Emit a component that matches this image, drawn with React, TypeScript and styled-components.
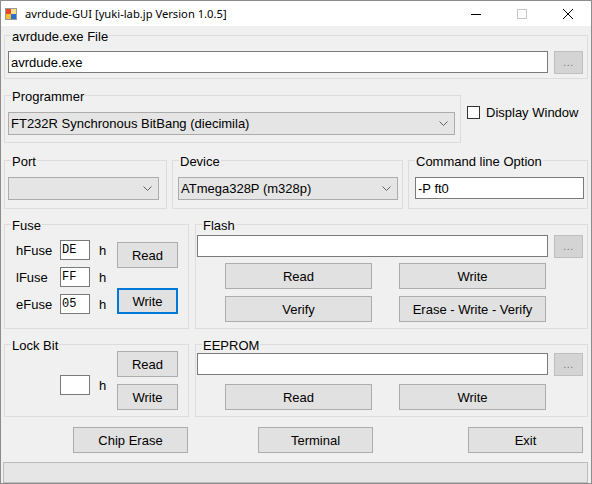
import React from "react";
import styled, { createGlobalStyle, css } from "styled-components";

const GlobalStyle = createGlobalStyle`
  html, body { margin: 0; padding: 0; background: #f0f0f0; }
  * { box-sizing: border-box; }
`;

const Window = styled.div`
  width: 592px;
  height: 484px;
  border: 1px solid #8c8c8c;
  background: #f0f0f0;
  display: flex;
  flex-direction: column;
  font-family: "Liberation Sans", Arial, sans-serif;
  font-size: 13px;
  color: #000;
  overflow: hidden;
`;

const TitleBar = styled.div`
  height: 25px;
  flex: none;
  background: #fff;
  display: flex;
  align-items: center;
`;

const TitleIcon = styled.svg`
  margin-left: 4px;
  flex: none;
`;

const TitleText = styled.div`
  margin-left: 8px;
  flex: 1;
  font-family: "Noto Sans", "Open Sans", sans-serif;
  font-size: 11.2px;
  color: #000;
  white-space: nowrap;
`;

const CaptionButton = styled.div`
  width: 46px;
  height: 25px;
  flex: none;
  display: flex;
  align-items: center;
  justify-content: center;
`;

const Client = styled.div`
  flex: 1;
  display: flex;
  flex-direction: column;
  padding: 9px 3px 0 3px;
`;

const Row = styled.div<{ $mt: number; $gap?: number; $h?: number }>`
  display: flex;
  margin-top: ${(p) => p.$mt}px;
  gap: ${(p) => p.$gap ?? 0}px;
  ${(p) => (p.$h ? `height: ${p.$h}px;` : "")}
  flex: none;
`;

const Group = styled.div<{ $h: number; $w?: number }>`
  border: 1px solid #dcdcdc;
  height: ${(p) => p.$h}px;
  ${(p) => (p.$w ? `width: ${p.$w}px; flex: none;` : "flex: 1; min-width: 0;")}
`;

const Legend = styled.div`
  width: fit-content;
  height: 15px;
  line-height: 15px;
  margin: -7px 0 0 6px;
  padding: 0 1px;
  background: #f0f0f0;
  white-space: nowrap;
`;

const Body = styled.div<{ $pad: string; $col?: boolean; $gap?: number }>`
  display: flex;
  flex-direction: ${(p) => (p.$col ? "column" : "row")};
  padding: ${(p) => p.$pad};
  gap: ${(p) => p.$gap ?? 0}px;
`;

const TextBox = styled.div<{ $w?: number; $h?: number; $mono?: boolean }>`
  height: ${(p) => p.$h ?? 22}px;
  ${(p) => (p.$w ? `width: ${p.$w}px; flex: none;` : "flex: 1; min-width: 0;")}
  background: #fff;
  border: 1px solid #7a7a7a;
  padding-left: 2px;
  display: flex;
  align-items: center;
  white-space: nowrap;
  ${(p) =>
    p.$mono &&
    css`
      font-family: "Liberation Mono", "DejaVu Sans Mono", monospace;
      font-size: 12px;
      padding-left: 1px;
    `}
`;

const Combo = styled.div<{ $w: number }>`
  width: ${(p) => p.$w}px;
  height: 23px;
  flex: none;
  background: #e5e5e5;
  border: 1px solid #acacac;
  padding-left: 2px;
  display: flex;
  align-items: center;
  white-space: nowrap;
`;

const ComboText = styled.span`
  flex: 1;
`;

const ComboArrow = styled.span`
  width: 22px;
  display: flex;
  justify-content: center;
  align-items: center;
`;

const Button = styled.button<{ $w: number; $h?: number; $focused?: boolean; $disabled?: boolean }>`
  width: ${(p) => p.$w}px;
  height: ${(p) => p.$h ?? 26}px;
  flex: none;
  margin: 0;
  padding: 0;
  font: inherit;
  color: #000;
  background: #e1e1e1;
  border: 1px solid #adadad;
  display: flex;
  align-items: center;
  justify-content: center;
  ${(p) =>
    p.$focused &&
    css`
      border: 2px solid #0078d7;
    `}
  ${(p) =>
    p.$disabled &&
    css`
      background: #d4d4d4;
      border-color: #bfbfbf;
      color: #7a7a7a;
      font-size: 11px;
      padding-bottom: 2px;
      letter-spacing: 0.5px;
    `}
`;

const CheckArea = styled.div`
  display: flex;
  align-items: center;
  gap: 6px;
  margin-left: 6px;
  padding-top: 7px;
  height: 20px;
  box-sizing: content-box;
`;

const CheckBox = styled.span`
  width: 13px;
  height: 13px;
  border: 1px solid #333;
  background: #fff;
  flex: none;
`;

const FieldCol = styled.div<{ $gap: number; $mt?: number }>`
  display: flex;
  flex-direction: column;
  gap: ${(p) => p.$gap}px;
  margin-top: ${(p) => p.$mt ?? 0}px;
`;

const FieldRow = styled.div`
  display: flex;
  align-items: center;
  height: 20px;
`;

const FieldLabel = styled.span<{ $w: number }>`
  width: ${(p) => p.$w}px;
  flex: none;
`;

const Unit = styled.span`
  width: 27px;
  padding-left: 9px;
  flex: none;
`;

const ButtonGrid = styled.div<{ $ml: number; $mt: number }>`
  display: grid;
  grid-template-columns: 147px 147px;
  column-gap: 27px;
  row-gap: 7px;
  margin-left: ${(p) => p.$ml}px;
  margin-top: ${(p) => p.$mt}px;
`;

const StatusBar = styled.div`
  margin-top: 9px;
  margin-left: -1px;
  height: 21px;
  flex: none;
  background: #e6e6e6;
  border: 1px solid #bcbcbc;
`;

const Chevron = () => (
  <svg width="9" height="5" viewBox="0 0 9 5">
    <path d="M0.5 0.5 L4.5 4.5 L8.5 0.5" fill="none" stroke="#606060" strokeWidth="1" />
  </svg>
);

export default function App() {
  return (
    <>
      <GlobalStyle />
      <Window>
        <TitleBar>
          <TitleIcon width="12" height="12" viewBox="0 0 12 12">
            <rect x="0.5" y="0.5" width="11" height="11" fill="#f4f4f4" stroke="#9a9a9a" />
            <rect x="1" y="1" width="5" height="5" fill="#e8472c" />
            <rect x="6" y="6" width="5" height="5" fill="#2a6fd0" />
            <rect x="1" y="6" width="5" height="5" fill="#f2c230" />
            <rect x="6" y="1" width="5" height="5" fill="#f7e08a" />
          </TitleIcon>
          <TitleText>avrdude-GUI [yuki-lab.jp Version 1.0.5]</TitleText>
          <CaptionButton>
            <svg width="10" height="10" viewBox="0 0 10 10">
              <path d="M0 5.5 H10" stroke="#000" strokeWidth="1" />
            </svg>
          </CaptionButton>
          <CaptionButton>
            <svg width="10" height="10" viewBox="0 0 10 10">
              <rect x="0.5" y="0.5" width="9" height="9" fill="none" stroke="#c8c8c8" />
            </svg>
          </CaptionButton>
          <CaptionButton>
            <svg width="10" height="10" viewBox="0 0 10 10">
              <path d="M0 0 L10 10 M10 0 L0 10" stroke="#000" strokeWidth="1" />
            </svg>
          </CaptionButton>
        </TitleBar>

        <Client>
          <Group $h={44}>
            <Legend>avrdude.exe File</Legend>
            <Body $pad="7px 4px 0 3px" $gap={6}>
              <TextBox>avrdude.exe</TextBox>
              <Button $w={29} $h={23} $disabled>
                ...
              </Button>
            </Body>
          </Group>

          <Row $mt={16}>
            <Group $h={48} $w={457}>
              <Legend>Programmer</Legend>
              <Body $pad="8px 0 0 3px">
                <Combo $w={447}>
                  <ComboText>FT232R Synchronous BitBang (diecimila)</ComboText>
                  <ComboArrow>
                    <Chevron />
                  </ComboArrow>
                </Combo>
              </Body>
            </Group>
            <CheckArea>
              <CheckBox />
              <span>Display Window</span>
            </CheckArea>
          </Row>

          <Row $mt={17} $gap={5}>
            <Group $h={49} $w={163}>
              <Legend>Port</Legend>
              <Body $pad="8px 0 0 3px">
                <Combo $w={151}>
                  <ComboText />
                  <ComboArrow>
                    <Chevron />
                  </ComboArrow>
                </Combo>
              </Body>
            </Group>
            <Group $h={49} $w={231}>
              <Legend>Device</Legend>
              <Body $pad="8px 0 0 5px">
                <Combo $w={220}>
                  <ComboText>ATmega328P (m328p)</ComboText>
                  <ComboArrow>
                    <Chevron />
                  </ComboArrow>
                </Combo>
              </Body>
            </Group>
            <Group $h={49}>
              <Legend>Command line Option</Legend>
              <Body $pad="8px 0 0 6px">
                <TextBox $w={169}>-P ft0</TextBox>
              </Body>
            </Group>
          </Row>

          <Row $mt={15} $gap={6}>
            <Group $h={105} $w={185}>
              <Legend>Fuse</Legend>
              <Body $pad="7px 0 0 11px">
                <FieldCol $gap={7}>
                  <FieldRow>
                    <FieldLabel $w={44}>hFuse</FieldLabel>
                    <TextBox $w={30} $h={20} $mono>DE</TextBox>
                    <Unit>h</Unit>
                  </FieldRow>
                  <FieldRow>
                    <FieldLabel $w={44}>lFuse</FieldLabel>
                    <TextBox $w={30} $h={20} $mono>FF</TextBox>
                    <Unit>h</Unit>
                  </FieldRow>
                  <FieldRow>
                    <FieldLabel $w={44}>eFuse</FieldLabel>
                    <TextBox $w={30} $h={20} $mono>05</TextBox>
                    <Unit>h</Unit>
                  </FieldRow>
                </FieldCol>
                <FieldCol $gap={20} $mt={2}>
                  <Button $w={61}>Read</Button>
                  <Button $w={61} $focused>
                    Write
                  </Button>
                </FieldCol>
              </Body>
            </Group>
            <Group $h={105}>
              <Legend>Flash</Legend>
              <Body $pad="2px 4px 0 1px" $gap={6}>
                <TextBox />
                <Button $w={29} $h={23} $disabled>
                  ...
                </Button>
              </Body>
              <ButtonGrid $ml={29} $mt={5}>
                <Button $w={147}>Read</Button>
                <Button $w={147}>Write</Button>
                <Button $w={147}>Verify</Button>
                <Button $w={147}>Erase - Write - Verify</Button>
              </ButtonGrid>
            </Group>
          </Row>

          <Row $mt={15} $gap={6}>
            <Group $h={73} $w={185}>
              <Legend>Lock Bit</Legend>
              <Body $pad="0 0 0 55px" style={{ marginTop: -2 }}>
                <FieldCol $gap={0} $mt={24}>
                  <FieldRow>
                    <TextBox $w={30} $h={20} $mono />
                    <Unit>h</Unit>
                  </FieldRow>
                </FieldCol>
                <FieldCol $gap={7}>
                  <Button $w={61}>Read</Button>
                  <Button $w={61}>Write</Button>
                </FieldCol>
              </Body>
            </Group>
            <Group $h={73}>
              <Legend>EEPROM</Legend>
              <Body $pad="0 4px 0 1px" $gap={6}>
                <TextBox />
                <Button $w={29} $h={23} $disabled>
                  ...
                </Button>
              </Body>
              <ButtonGrid $ml={29} $mt={8}>
                <Button $w={147}>Read</Button>
                <Button $w={147}>Write</Button>
              </ButtonGrid>
            </Group>
          </Row>

          <Row $mt={10} $h={26}>
            <Button $w={115} style={{ marginLeft: 69 }}>
              Chip Erase
            </Button>
            <Button $w={115} style={{ marginLeft: 70 }}>
              Terminal
            </Button>
            <Button $w={115} style={{ marginLeft: 95 }}>
              Exit
            </Button>
          </Row>

          <StatusBar />
        </Client>
      </Window>
    </>
  );
}
